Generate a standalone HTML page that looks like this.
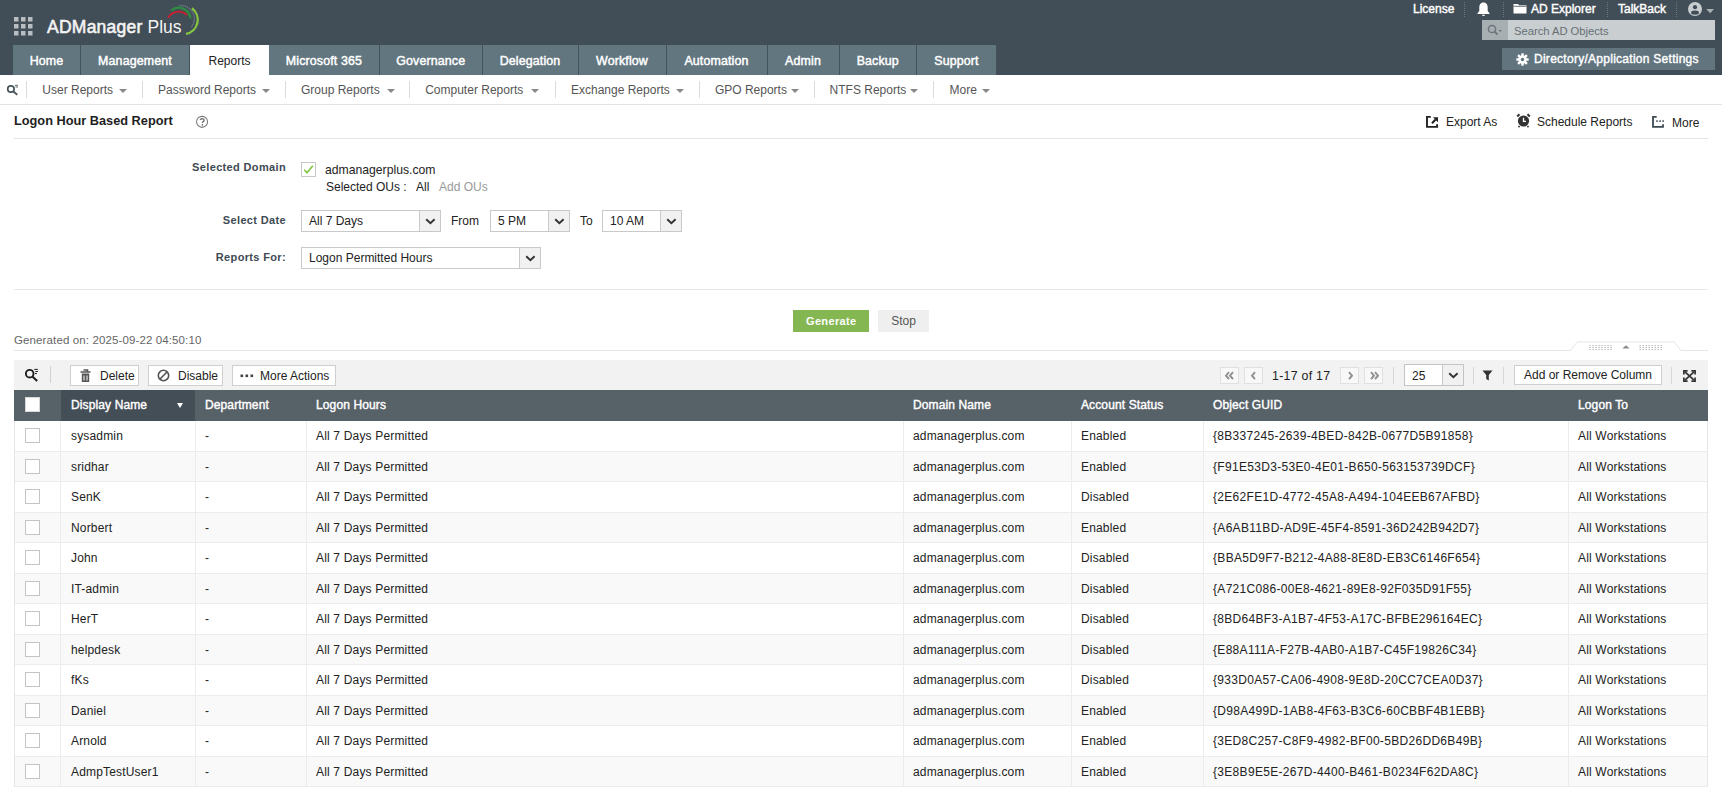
<!DOCTYPE html>
<html><head><meta charset="utf-8">
<style>
*{box-sizing:border-box;margin:0;padding:0}
html,body{width:1722px;height:787px;overflow:hidden;background:#fff;font-family:"Liberation Sans",sans-serif;color:#222;font-size:12px}
.a{position:absolute;white-space:nowrap}
#hdr{position:absolute;left:0;top:0;width:1722px;height:75px;background:#424e57}
.tab{position:absolute;top:45px;height:30px;background:#62767f;color:#fff;font-weight:normal;-webkit-text-stroke:0.45px #fff;font-size:12.4px;letter-spacing:0.15px;line-height:33px;text-align:center;border-right:1px solid #44525a}
.tab.on{background:#fff;color:#222;font-weight:normal;border-right:none;-webkit-text-stroke:0;font-size:12px;letter-spacing:0}
.sub{position:absolute;top:76px;height:28px;line-height:28px;color:#555;font-size:12px}
.caret{display:inline-block;width:0;height:0;border-left:4px solid transparent;border-right:4px solid transparent;border-top:4px solid #777;vertical-align:middle}
.caret2{width:0;height:0;border-left:4px solid transparent;border-right:4px solid transparent;border-top:4px solid #888}
.pg{position:absolute;top:367px;width:19px;height:17px;border:1px solid #e0e0e0;background:#f8f8f8}
.pg svg{position:absolute;left:0;top:0}
.r{position:relative;height:30.5px;border-bottom:1px solid #ececec}
.c{position:absolute;top:0;line-height:30px;font-size:12px;color:#222;white-space:nowrap;letter-spacing:0.17px}
.g{letter-spacing:0.31px}
.vsep{position:absolute;width:1px;background:#dcdcdc}
.hl{position:absolute;height:1px;background:#e4e4e4}
.lbl{position:absolute;font-weight:bold;color:#3e4a53;font-size:11px;letter-spacing:0.35px;text-align:right}
.sel{position:absolute;border:1px solid #c9c9c9;background:#fff;height:22px;line-height:20px;padding-left:7px;font-size:12px;color:#222}
.sel .ar{position:absolute;right:0;top:0;bottom:0;width:21px;background:#f1f1f1;border-left:1px solid #c9c9c9}
.sel .ar svg{position:absolute;left:5px;top:6.5px}
.btn{position:absolute;border:1px solid #cfcfcf;background:#fff;height:21px;line-height:21px;font-size:12px;color:#222}
.th{position:absolute;top:390px;height:31px;line-height:31px;color:#fff;font-weight:normal;-webkit-text-stroke:0.4px #fff;font-size:12px;letter-spacing:0.12px}
.row{position:absolute;left:14px;width:1694px;height:30.5px;border-bottom:1px solid #ececec}
.cell{position:absolute;top:0;line-height:30px;font-size:12px;color:#222}
.cb{position:absolute;left:11px;top:7px;width:15px;height:15px;border:1px solid #c4c4c4;background:#fff}
</style></head><body>
<div id="hdr">
<svg class="a" style="left:13px;top:16px" width="20" height="20" viewBox="0 0 20 20"><g fill="#b9bec2">
<rect x="1" y="1" width="4.5" height="4.5"/><rect x="8" y="1" width="4.5" height="4.5"/><rect x="15" y="1" width="4.5" height="4.5"/>
<rect x="1" y="8" width="4.5" height="4.5"/><rect x="8" y="8" width="4.5" height="4.5"/><rect x="15" y="8" width="4.5" height="4.5"/>
<rect x="1" y="15" width="4.5" height="4.5"/><rect x="8" y="15" width="4.5" height="4.5"/><rect x="15" y="15" width="4.5" height="4.5"/></g></svg>
<div class="a" style="left:47px;top:16px;font-size:17.5px;color:#f4f4f4;letter-spacing:0px;line-height:22px"><span style="-webkit-text-stroke:0.55px #f4f4f4;letter-spacing:0.25px">ADManager</span> Plus</div>
<svg class="a" style="left:0;top:0" width="210" height="45" viewBox="0 0 210 45">
<path d="M168 17.9 A12.2 12.2 0 0 1 187 15" stroke="#c8202f" stroke-width="1.8" fill="none"/>
<path d="M171.1 10.7 A11.6 11.6 0 0 1 190.4 18.4" stroke="#2e8b3f" stroke-width="2.3" fill="none"/>
<path d="M179.3 5.6 A13.3 13.3 0 0 1 191.4 27" stroke="#6f8089" stroke-width="1.4" fill="none" stroke-dasharray="1.2 0.8"/>
<path d="M191.9 8.3 A14.3 14.3 0 0 1 186 33.9" stroke="#86c540" stroke-width="2.3" fill="none"/>
</svg>
<div class="a" style="left:1413px;top:0.5px;color:#fff;font-weight:normal;-webkit-text-stroke:0.4px #fff;font-size:12px;line-height:16px">License</div>
<div class="a" style="left:1464px;top:2px;height:15px;border-left:1px dotted #6b777f"></div>
<svg class="a" style="left:1476px;top:2px" width="15" height="15" viewBox="0 0 15 15"><path d="M7.5 0.5 C4.5 0.5 3.3 3 3.3 5.5 L3.3 9 L1.5 11.2 L1.5 12 L13.5 12 L13.5 11.2 L11.7 9 L11.7 5.5 C11.7 3 10.5 0.5 7.5 0.5Z M5.8 12.8 A1.8 1.8 0 0 0 9.2 12.8Z" fill="#fff"/></svg>
<div class="a" style="left:1503px;top:2px;height:15px;border-left:1px dotted #6b777f"></div>
<svg class="a" style="left:1513px;top:3px" width="14" height="11" viewBox="0 0 14 11"><path d="M0.5 1 L5 1 L6.2 2.3 L13.5 2.3 L13.5 10.5 L0.5 10.5Z" fill="#fff"/><path d="M0.5 3.3 L13.5 3.3" stroke="#414d56" stroke-width="0.8"/></svg>
<div class="a" style="left:1531px;top:0.5px;color:#fff;font-weight:normal;-webkit-text-stroke:0.4px #fff;font-size:12px;line-height:16px">AD Explorer</div>
<div class="a" style="left:1607px;top:2px;height:15px;border-left:1px dotted #6b777f"></div>
<div class="a" style="left:1618px;top:0.5px;color:#fff;font-weight:normal;-webkit-text-stroke:0.4px #fff;font-size:12px;line-height:16px">TalkBack</div>
<div class="a" style="left:1676px;top:2px;height:15px;border-left:1px dotted #6b777f"></div>
<svg class="a" style="left:1688px;top:2px" width="28" height="15" viewBox="0 0 28 15"><circle cx="7" cy="7" r="7" fill="#c8cdd0"/><circle cx="7" cy="5.2" r="2.1" fill="#414d56"/><ellipse cx="7" cy="10.6" rx="4" ry="2.2" fill="#414d56"/><path d="M18.3 7 L26 7 L22.15 11.3Z" fill="#aab1b5"/></svg>
<div class="a" style="left:1482px;top:20px;width:233px;height:20px;background:#c9ced1"></div>
<div class="a" style="left:1482px;top:20px;width:26px;height:20px;background:#a8afb3"></div>
<svg class="a" style="left:1487px;top:24px" width="16" height="12" viewBox="0 0 16 12"><circle cx="5" cy="5" r="3.6" stroke="#6d767c" stroke-width="1.5" fill="none"/><path d="M7.6 7.6 L10.5 10.5" stroke="#6d767c" stroke-width="1.8"/><path d="M11.5 6 L15 6 L13.25 8Z" fill="#6d767c"/></svg>
<div class="a" style="left:1514px;top:22.5px;color:#666e73;font-size:11.2px;line-height:16px">Search AD Objects</div>
<div class="a" style="left:1502px;top:48px;width:213px;height:22px;background:#62757f"></div>
<svg class="a" style="left:1516px;top:53px" width="13" height="13" viewBox="0 0 13 13"><g fill="#fff"><circle cx="6.5" cy="6.5" r="4.2"/><g stroke="#fff" stroke-width="2.4"><path d="M6.5 0.3 V12.7"/><path d="M0.3 6.5 H12.7"/><path d="M2.1 2.1 L10.9 10.9"/><path d="M10.9 2.1 L2.1 10.9"/></g></g><circle cx="6.5" cy="6.5" r="1.7" fill="#62757f"/></svg>
<div class="a" style="left:1534px;top:51px;color:#fff;font-weight:normal;-webkit-text-stroke:0.4px #fff;font-size:12px;letter-spacing:0.27px;line-height:16px">Directory/Application Settings</div>
</div>

<div class="tab" style="left:13px;width:68px">Home</div>
<div class="tab" style="left:81px;width:109px">Management</div>
<div class="tab on" style="left:190px;width:79px">Reports</div>
<div class="tab" style="left:269px;width:111px">Microsoft 365</div>
<div class="tab" style="left:380px;width:102.5px">Governance</div>
<div class="tab" style="left:482.5px;width:96.0px">Delegation</div>
<div class="tab" style="left:578.5px;width:88.0px">Workflow</div>
<div class="tab" style="left:666.5px;width:101.0px">Automation</div>
<div class="tab" style="left:767.5px;width:72.0px">Admin</div>
<div class="tab" style="left:839.5px;width:77.5px">Backup</div>
<div class="tab" style="left:917px;width:80px">Support</div>
<div class="sub" style="left:42.3px">User Reports</div><div class="a caret2" style="left:119.3px;top:89px"></div>
<div class="sub" style="left:158px">Password Reports</div><div class="a caret2" style="left:262px;top:89px"></div>
<div class="sub" style="left:301px">Group Reports</div><div class="a caret2" style="left:386.5px;top:89px"></div>
<div class="sub" style="left:425.2px">Computer Reports</div><div class="a caret2" style="left:531px;top:89px"></div>
<div class="sub" style="left:571px">Exchange Reports</div><div class="a caret2" style="left:675.7px;top:89px"></div>
<div class="sub" style="left:714.9px">GPO Reports</div><div class="a caret2" style="left:791px;top:89px"></div>
<div class="sub" style="left:829.6px">NTFS Reports</div><div class="a caret2" style="left:910px;top:89px"></div>
<div class="sub" style="left:949.5px">More</div><div class="a caret2" style="left:982px;top:89px"></div>
<div class="vsep" style="left:26px;top:81px;height:17px"></div>
<div class="vsep" style="left:142px;top:81px;height:17px"></div>
<div class="vsep" style="left:285px;top:81px;height:17px"></div>
<div class="vsep" style="left:409px;top:81px;height:17px"></div>
<div class="vsep" style="left:555px;top:81px;height:17px"></div>
<div class="vsep" style="left:699px;top:81px;height:17px"></div>
<div class="vsep" style="left:814px;top:81px;height:17px"></div>
<div class="vsep" style="left:933px;top:81px;height:17px"></div>
<svg class="a" style="left:6px;top:84px" width="14" height="13" viewBox="0 0 14 13"><circle cx="4.9" cy="5" r="3.2" stroke="#48545c" stroke-width="1.7" fill="none"/><path d="M7.3 7.5 L11.3 10.8" stroke="#48545c" stroke-width="1.8"/><path d="M9 1.3 H12 M9.5 3 H12" stroke="#48545c" stroke-width="0.9"/></svg>
<div class="hl" style="left:0;top:104px;width:1722px;background:#e2e2e2"></div>
<div class="a" style="left:14px;top:113px;font-size:12.75px;font-weight:bold;color:#1e1e1e;line-height:16px">Logon Hour Based Report</div>
<svg class="a" style="left:195px;top:115px" width="14" height="14" viewBox="0 0 14 14"><circle cx="7.05" cy="6.85" r="5.5" stroke="#777" stroke-width="1.05" fill="none"/><path d="M5.2 4.9 Q5.5 3.6 7.2 3.6 Q9.2 3.7 9.2 5.2 Q9.1 6.4 7.6 7 L7.4 7.8" stroke="#666" stroke-width="1.3" fill="none"/><circle cx="7.4" cy="9.9" r="0.8" fill="#666"/></svg>
<div class="hl" style="left:14px;top:138px;width:1694px"></div>
<svg class="a" style="left:1426px;top:115px" width="13" height="14" viewBox="0 0 13 14"><path d="M4.8 1.9 H1 V11.9 H11.1 V9.2" stroke="#222" stroke-width="1.9" fill="none"/><path d="M6 8.2 L9.6 4.6" stroke="#222" stroke-width="2.1"/><path d="M7 2.2 L12 2.2 L12 7.2Z" fill="#222"/></svg>
<div class="a" style="left:1446px;top:114px;font-size:12px;color:#222;line-height:16px">Export As</div>
<svg class="a" style="left:1516px;top:113px" width="15" height="15" viewBox="0 0 15 15"><circle cx="7.5" cy="8" r="5.6" fill="#333"/><path d="M1.2 3.5 L3.5 1.2 M13.8 3.5 L11.5 1.2" stroke="#333" stroke-width="2"/><path d="M3.5 13 L2.5 14.2 M11.5 13 L12.5 14.2" stroke="#333" stroke-width="1.6"/><path d="M7.5 4.8 V8.3 H10" stroke="#fff" stroke-width="1.3" fill="none"/></svg>
<div class="a" style="left:1537px;top:114px;font-size:12px;color:#222;line-height:16px">Schedule Reports</div>
<svg class="a" style="left:1652px;top:116px" width="13" height="12" viewBox="0 0 13 12"><path d="M4.7 0.85 H1 V10.85 H11 V8.2" stroke="#3d4a53" stroke-width="1.8" fill="none"/><g fill="#3d4a53"><rect x="4.2" y="4.3" width="1.6" height="1.6"/><rect x="7.3" y="4.3" width="1.6" height="1.6"/><rect x="10.3" y="4.3" width="1.6" height="1.6"/></g></svg>
<div class="a" style="left:1672px;top:114.5px;font-size:12px;color:#222;line-height:16px">More</div>
<div class="lbl" style="left:150px;top:160px;width:136px;line-height:14px">Selected Domain</div>
<div class="a" style="left:301px;top:162px;width:15px;height:15px;border:1px solid #c7c7c7;background:#fff"></div>
<svg class="a" style="left:301px;top:162px" width="15" height="15" viewBox="0 0 15 15"><path d="M3.2 7.8 L6 10.8 L11.8 3.8" stroke="#7fc241" stroke-width="1.6" fill="none"/></svg>
<div class="a" style="left:325px;top:162px;font-size:12.2px;color:#222;line-height:16px">admanagerplus.com</div>
<div class="a" style="left:326px;top:179px;font-size:12px;color:#222;line-height:16px">Selected OUs :</div>
<div class="a" style="left:416px;top:179px;font-size:12px;color:#222;line-height:16px">All</div>
<div class="a" style="left:439px;top:179px;font-size:12px;color:#999;line-height:16px">Add OUs</div>
<div class="lbl" style="left:150px;top:213px;width:136px;line-height:14px">Select Date</div>
<div class="sel" style="left:301px;top:210px;width:140px">All 7 Days<div class="ar"><svg width="11" height="7" viewBox="0 0 11 7"><path d="M1.2 1.2 L5.4 5.2 L9.6 1.2" stroke="#333" stroke-width="1.9" fill="none"/></svg></div></div>
<div class="a" style="left:451px;top:213px;font-size:12px;color:#222;line-height:16px">From</div>
<div class="sel" style="left:490px;top:210px;width:80px">5 PM<div class="ar"><svg width="11" height="7" viewBox="0 0 11 7"><path d="M1.2 1.2 L5.4 5.2 L9.6 1.2" stroke="#333" stroke-width="1.9" fill="none"/></svg></div></div>
<div class="a" style="left:580px;top:213px;font-size:12px;color:#222;line-height:16px">To</div>
<div class="sel" style="left:602px;top:210px;width:80px">10 AM<div class="ar"><svg width="11" height="7" viewBox="0 0 11 7"><path d="M1.2 1.2 L5.4 5.2 L9.6 1.2" stroke="#333" stroke-width="1.9" fill="none"/></svg></div></div>
<div class="lbl" style="left:150px;top:250px;width:136px;line-height:14px">Reports For:</div>
<div class="sel" style="left:301px;top:247px;width:240px">Logon Permitted Hours<div class="ar"><svg width="11" height="7" viewBox="0 0 11 7"><path d="M1.2 1.2 L5.4 5.2 L9.6 1.2" stroke="#333" stroke-width="1.9" fill="none"/></svg></div></div>
<div class="hl" style="left:14px;top:289px;width:1694px;background:#e8e8e8"></div>
<div class="a" style="left:793px;top:310px;width:76px;height:22px;background:#84b752;color:#fff;font-weight:bold;font-size:11px;letter-spacing:0.35px;line-height:22px;text-align:center;padding-left:0.5px">Generate</div>
<div class="a" style="left:878px;top:310px;width:51px;height:22px;background:#efefef;color:#555;font-size:12px;line-height:22px;text-align:center">Stop</div>
<div class="a" style="left:14px;top:332px;font-size:11.5px;color:#666;letter-spacing:0.12px;line-height:16px">Generated on: 2025-09-22 04:50:10</div>
<div class="hl" style="left:14px;top:350px;width:1694px;background:#e6e6e6"></div>
<div class="a" style="left:14px;top:360px;width:1694px;height:30px;background:#f2f2f2"></div>
<svg class="a" style="left:24px;top:367px" width="16" height="16" viewBox="0 0 16 16"><circle cx="5.7" cy="6.7" r="3.8" stroke="#1d1d1d" stroke-width="1.9" fill="none"/><path d="M8.6 9.7 L13.2 14" stroke="#1d1d1d" stroke-width="2"/><path d="M10.3 2.4 H13.9 M11.3 4.5 H13.9 M11 6.5 H12.9" stroke="#1d1d1d" stroke-width="1"/></svg>
<div class="vsep" style="left:50px;top:366px;height:17px;background:#d0d0d0"></div>
<div class="btn" style="left:70px;top:365px;width:69px;padding-left:29px">Delete</div>
<svg class="a" style="left:80px;top:369px" width="11" height="14" viewBox="0 0 11 14"><path d="M3.5 1 H7.5 V2.5 M0.5 3 H10.5" stroke="#555" stroke-width="1.5" fill="none"/><path d="M1.8 4.5 H9.2 V13 H1.8Z" fill="#555"/><path d="M4 6.5 V11.5 M7 6.5 V11.5" stroke="#fff" stroke-width="1"/></svg>
<div class="btn" style="left:148px;top:365px;width:75px;padding-left:29px">Disable</div>
<svg class="a" style="left:157px;top:369px" width="13" height="13" viewBox="0 0 13 13"><circle cx="6.5" cy="6.5" r="5.2" stroke="#555" stroke-width="1.6" fill="none"/><path d="M2.8 10.2 L10.2 2.8" stroke="#555" stroke-width="1.6"/></svg>
<div class="btn" style="left:232px;top:365px;width:104px;padding-left:27px">More Actions</div>
<svg class="a" style="left:240px;top:374px" width="14" height="4" viewBox="0 0 14 4"><rect x="0.5" y="0.5" width="2.6" height="2.6" fill="#444"/><rect x="5.5" y="0.5" width="2.6" height="2.6" fill="#444"/><rect x="10.5" y="0.5" width="2.6" height="2.6" fill="#444"/></svg>
<svg class="a" style="left:1569px;top:340px" width="114" height="12" viewBox="0 0 114 12"><path d="M0.9 11.2 L8.3 1.9 H105.2 L112.6 11.2Z" fill="#fff"/><path d="M0 10.5 H1.4 L8.3 1.9 H105.2 L112.1 10.5 H114" stroke="#e6e6e6" stroke-width="1" fill="none"/><g fill="#a6a6a6"><rect x="20.5" y="5.0" width="1.1" height="1.1"/><rect x="70.6" y="5.0" width="1.1" height="1.1"/><rect x="20.5" y="7.0" width="1.1" height="1.1"/><rect x="70.6" y="7.0" width="1.1" height="1.1"/><rect x="20.5" y="9.0" width="1.1" height="1.1"/><rect x="70.6" y="9.0" width="1.1" height="1.1"/><rect x="23.5" y="5.0" width="1.1" height="1.1"/><rect x="73.6" y="5.0" width="1.1" height="1.1"/><rect x="23.5" y="7.0" width="1.1" height="1.1"/><rect x="73.6" y="7.0" width="1.1" height="1.1"/><rect x="23.5" y="9.0" width="1.1" height="1.1"/><rect x="73.6" y="9.0" width="1.1" height="1.1"/><rect x="26.5" y="5.0" width="1.1" height="1.1"/><rect x="76.6" y="5.0" width="1.1" height="1.1"/><rect x="26.5" y="7.0" width="1.1" height="1.1"/><rect x="76.6" y="7.0" width="1.1" height="1.1"/><rect x="26.5" y="9.0" width="1.1" height="1.1"/><rect x="76.6" y="9.0" width="1.1" height="1.1"/><rect x="29.5" y="5.0" width="1.1" height="1.1"/><rect x="79.6" y="5.0" width="1.1" height="1.1"/><rect x="29.5" y="7.0" width="1.1" height="1.1"/><rect x="79.6" y="7.0" width="1.1" height="1.1"/><rect x="29.5" y="9.0" width="1.1" height="1.1"/><rect x="79.6" y="9.0" width="1.1" height="1.1"/><rect x="32.5" y="5.0" width="1.1" height="1.1"/><rect x="82.6" y="5.0" width="1.1" height="1.1"/><rect x="32.5" y="7.0" width="1.1" height="1.1"/><rect x="82.6" y="7.0" width="1.1" height="1.1"/><rect x="32.5" y="9.0" width="1.1" height="1.1"/><rect x="82.6" y="9.0" width="1.1" height="1.1"/><rect x="35.5" y="5.0" width="1.1" height="1.1"/><rect x="85.6" y="5.0" width="1.1" height="1.1"/><rect x="35.5" y="7.0" width="1.1" height="1.1"/><rect x="85.6" y="7.0" width="1.1" height="1.1"/><rect x="35.5" y="9.0" width="1.1" height="1.1"/><rect x="85.6" y="9.0" width="1.1" height="1.1"/><rect x="38.5" y="5.0" width="1.1" height="1.1"/><rect x="88.6" y="5.0" width="1.1" height="1.1"/><rect x="38.5" y="7.0" width="1.1" height="1.1"/><rect x="88.6" y="7.0" width="1.1" height="1.1"/><rect x="38.5" y="9.0" width="1.1" height="1.1"/><rect x="88.6" y="9.0" width="1.1" height="1.1"/><rect x="41.5" y="5.0" width="1.1" height="1.1"/><rect x="91.6" y="5.0" width="1.1" height="1.1"/><rect x="41.5" y="7.0" width="1.1" height="1.1"/><rect x="91.6" y="7.0" width="1.1" height="1.1"/><rect x="41.5" y="9.0" width="1.1" height="1.1"/><rect x="91.6" y="9.0" width="1.1" height="1.1"/></g><path d="M53.3 8.6 L60.6 8.6 L57 5.2Z" fill="#8a8a8a"/></svg>
<div class="pg" style="left:1220px"><svg width="18" height="17" viewBox="0 0 18 17"><path d="M8 4.2 L5 7.7 L8 11.2 M12 4.2 L9 7.7 L12 11.2" stroke="#8f8f8f" stroke-width="1.9" fill="none"/></svg></div>
<div class="pg" style="left:1244px"><svg width="18" height="17" viewBox="0 0 18 17"><path d="M10 4.2 L7 7.7 L10 11.2" stroke="#8f8f8f" stroke-width="1.9" fill="none"/></svg></div>
<div class="a" style="left:1272px;top:368px;font-size:12.3px;color:#222;line-height:16px;letter-spacing:0.3px">1-17 of 17</div>
<div class="pg" style="left:1340px"><svg width="18" height="17" viewBox="0 0 18 17"><path d="M8 4.2 L11 7.7 L8 11.2" stroke="#8f8f8f" stroke-width="1.9" fill="none"/></svg></div>
<div class="pg" style="left:1364px"><svg width="18" height="17" viewBox="0 0 18 17"><path d="M6 4.2 L9 7.7 L6 11.2 M10 4.2 L13 7.7 L10 11.2" stroke="#8f8f8f" stroke-width="1.9" fill="none"/></svg></div>
<div class="vsep" style="left:1393px;top:367px;height:17px;background:#d6d6d6"></div>
<div class="sel" style="left:1404px;top:364px;width:60px;height:22px;border-color:#c4c4c4;line-height:22px">25<div class="ar"><svg width="11" height="7" viewBox="0 0 11 7"><path d="M1.2 1.2 L5.4 5.2 L9.6 1.2" stroke="#333" stroke-width="1.9" fill="none"/></svg></div></div>
<div class="vsep" style="left:1473px;top:367px;height:17px;background:#d6d6d6"></div>
<svg class="a" style="left:1482px;top:370px" width="11" height="11" viewBox="0 0 11 11"><path d="M0.5 0.5 H10.5 L6.8 5 V10.5 L4.2 9 V5Z" fill="#333"/></svg>
<div class="vsep" style="left:1503px;top:367px;height:17px;background:#d6d6d6"></div>
<div class="btn" style="left:1514px;top:365px;width:148px;text-align:center;height:20px;line-height:18px">Add or Remove Column</div>
<div class="vsep" style="left:1671px;top:367px;height:17px;background:#d6d6d6"></div>
<svg class="a" style="left:1683px;top:370px" width="13" height="12" viewBox="0 0 13 12"><path d="M2 1.8 L11 10.2 M11 1.8 L2 10.2" stroke="#333" stroke-width="1.7"/><path d="M0.9 4.6 V0.9 H4.6 M8.4 0.9 H12.1 V4.6 M12.1 7.4 V11.1 H8.4 M4.6 11.1 H0.9 V7.4" stroke="#333" stroke-width="1.7" fill="none"/></svg>
<div class="a" style="left:14px;top:390px;width:1694px;height:31px;background:#576168"></div>
<div class="a" style="left:61px;top:390px;width:134px;height:31px;background:#434e57"></div>
<div class="a" style="left:25px;top:397px;width:15px;height:15px;background:#fff;border:1px solid #d8d8d8"></div>
<div class="th" style="left:71px">Display Name</div>
<div class="th" style="left:205px">Department</div>
<div class="th" style="left:316px">Logon Hours</div>
<div class="th" style="left:913px">Domain Name</div>
<div class="th" style="left:1081px">Account Status</div>
<div class="th" style="left:1213px">Object GUID</div>
<div class="th" style="left:1578px">Logon To</div>
<div class="a" style="left:177px;top:403px;width:0;height:0;border-left:3.5px solid transparent;border-right:3.5px solid transparent;border-top:5px solid #fff"></div>
<div id="tbl" class="a" style="left:14px;top:421px;width:1694px;height:366px">
<div class="r" style="background:#fff"><div class="cb"></div><div class="c" style="left:57px">sysadmin</div><div class="c" style="left:191px">-</div><div class="c" style="left:302px">All 7 Days Permitted</div><div class="c" style="left:899px">admanagerplus.com</div><div class="c" style="left:1067px">Enabled</div><div class="c g" style="left:1199px">{8B337245-2639-4BED-842B-0677D5B91858}</div><div class="c" style="left:1564px">All Workstations</div></div>
<div class="r" style="background:#f9f9f9"><div class="cb"></div><div class="c" style="left:57px">sridhar</div><div class="c" style="left:191px">-</div><div class="c" style="left:302px">All 7 Days Permitted</div><div class="c" style="left:899px">admanagerplus.com</div><div class="c" style="left:1067px">Enabled</div><div class="c g" style="left:1199px">{F91E53D3-53E0-4E01-B650-563153739DCF}</div><div class="c" style="left:1564px">All Workstations</div></div>
<div class="r" style="background:#fff"><div class="cb"></div><div class="c" style="left:57px">SenK</div><div class="c" style="left:191px">-</div><div class="c" style="left:302px">All 7 Days Permitted</div><div class="c" style="left:899px">admanagerplus.com</div><div class="c" style="left:1067px">Disabled</div><div class="c g" style="left:1199px">{2E62FE1D-4772-45A8-A494-104EEB67AFBD}</div><div class="c" style="left:1564px">All Workstations</div></div>
<div class="r" style="background:#f9f9f9"><div class="cb"></div><div class="c" style="left:57px">Norbert</div><div class="c" style="left:191px">-</div><div class="c" style="left:302px">All 7 Days Permitted</div><div class="c" style="left:899px">admanagerplus.com</div><div class="c" style="left:1067px">Enabled</div><div class="c g" style="left:1199px">{A6AB11BD-AD9E-45F4-8591-36D242B942D7}</div><div class="c" style="left:1564px">All Workstations</div></div>
<div class="r" style="background:#fff"><div class="cb"></div><div class="c" style="left:57px">John</div><div class="c" style="left:191px">-</div><div class="c" style="left:302px">All 7 Days Permitted</div><div class="c" style="left:899px">admanagerplus.com</div><div class="c" style="left:1067px">Disabled</div><div class="c g" style="left:1199px">{BBA5D9F7-B212-4A88-8E8D-EB3C6146F654}</div><div class="c" style="left:1564px">All Workstations</div></div>
<div class="r" style="background:#f9f9f9"><div class="cb"></div><div class="c" style="left:57px">IT-admin</div><div class="c" style="left:191px">-</div><div class="c" style="left:302px">All 7 Days Permitted</div><div class="c" style="left:899px">admanagerplus.com</div><div class="c" style="left:1067px">Disabled</div><div class="c g" style="left:1199px">{A721C086-00E8-4621-89E8-92F035D91F55}</div><div class="c" style="left:1564px">All Workstations</div></div>
<div class="r" style="background:#fff"><div class="cb"></div><div class="c" style="left:57px">HerT</div><div class="c" style="left:191px">-</div><div class="c" style="left:302px">All 7 Days Permitted</div><div class="c" style="left:899px">admanagerplus.com</div><div class="c" style="left:1067px">Disabled</div><div class="c g" style="left:1199px">{8BD64BF3-A1B7-4F53-A17C-BFBE296164EC}</div><div class="c" style="left:1564px">All Workstations</div></div>
<div class="r" style="background:#f9f9f9"><div class="cb"></div><div class="c" style="left:57px">helpdesk</div><div class="c" style="left:191px">-</div><div class="c" style="left:302px">All 7 Days Permitted</div><div class="c" style="left:899px">admanagerplus.com</div><div class="c" style="left:1067px">Disabled</div><div class="c g" style="left:1199px">{E88A111A-F27B-4AB0-A1B7-C45F19826C34}</div><div class="c" style="left:1564px">All Workstations</div></div>
<div class="r" style="background:#fff"><div class="cb"></div><div class="c" style="left:57px">fKs</div><div class="c" style="left:191px">-</div><div class="c" style="left:302px">All 7 Days Permitted</div><div class="c" style="left:899px">admanagerplus.com</div><div class="c" style="left:1067px">Disabled</div><div class="c g" style="left:1199px">{933D0A57-CA06-4908-9E8D-20CC7CEA0D37}</div><div class="c" style="left:1564px">All Workstations</div></div>
<div class="r" style="background:#f9f9f9"><div class="cb"></div><div class="c" style="left:57px">Daniel</div><div class="c" style="left:191px">-</div><div class="c" style="left:302px">All 7 Days Permitted</div><div class="c" style="left:899px">admanagerplus.com</div><div class="c" style="left:1067px">Enabled</div><div class="c g" style="left:1199px">{D98A499D-1AB8-4F63-B3C6-60CBBF4B1EBB}</div><div class="c" style="left:1564px">All Workstations</div></div>
<div class="r" style="background:#fff"><div class="cb"></div><div class="c" style="left:57px">Arnold</div><div class="c" style="left:191px">-</div><div class="c" style="left:302px">All 7 Days Permitted</div><div class="c" style="left:899px">admanagerplus.com</div><div class="c" style="left:1067px">Enabled</div><div class="c g" style="left:1199px">{3ED8C257-C8F9-4982-BF00-5BD26DD6B49B}</div><div class="c" style="left:1564px">All Workstations</div></div>
<div class="r" style="background:#f9f9f9"><div class="cb"></div><div class="c" style="left:57px">AdmpTestUser1</div><div class="c" style="left:191px">-</div><div class="c" style="left:302px">All 7 Days Permitted</div><div class="c" style="left:899px">admanagerplus.com</div><div class="c" style="left:1067px">Enabled</div><div class="c g" style="left:1199px">{3E8B9E5E-267D-4400-B461-B0234F62DA8C}</div><div class="c" style="left:1564px">All Workstations</div></div>
<div class="a" style="left:46px;top:0;width:1px;height:366px;background:#ececec"></div>
<div class="a" style="left:181px;top:0;width:1px;height:366px;background:#ececec"></div>
<div class="a" style="left:292px;top:0;width:1px;height:366px;background:#ececec"></div>
<div class="a" style="left:889px;top:0;width:1px;height:366px;background:#ececec"></div>
<div class="a" style="left:1057px;top:0;width:1px;height:366px;background:#ececec"></div>
<div class="a" style="left:1189px;top:0;width:1px;height:366px;background:#ececec"></div>
<div class="a" style="left:1554px;top:0;width:1px;height:366px;background:#ececec"></div>
<div class="a" style="left:0;top:0;width:1px;height:366px;background:#e6e6e6"></div><div class="a" style="left:1693px;top:0;width:1px;height:366px;background:#e6e6e6"></div>
</div>
</body></html>
